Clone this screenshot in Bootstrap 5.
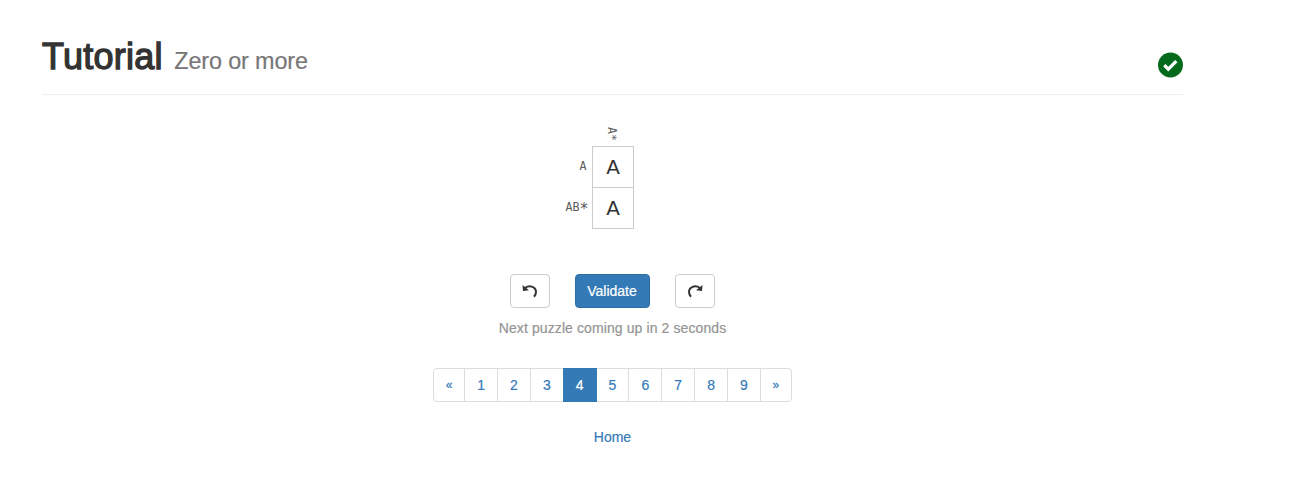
<!DOCTYPE html>
<html lang="en">
<head>
<meta charset="utf-8">
<meta name="viewport" content="width=device-width, initial-scale=1">
<title>Tutorial</title>
<link href="https://cdn.jsdelivr.net/npm/bootstrap@5.3.0/dist/css/bootstrap.min.css" rel="stylesheet">
<style>
body{font:14px/20px "Liberation Sans",Arial,sans-serif;color:#333;background:#fff;overflow:hidden}
.page{width:1141px;margin-left:42px}
.page-head{height:95px;border-bottom:1px solid #eee}
.page-head h1{font-size:36px;line-height:40px;font-weight:400;margin:37px 0 0;color:#333;white-space:nowrap}
.title-main{-webkit-text-stroke:1.3px #333;letter-spacing:.25px}
.title-sub{font-size:23.4px;color:#777;margin-left:1.5px;letter-spacing:-.13px;-webkit-text-stroke:.2px #777}
.solved{margin-top:52px}
.puzzle{display:grid;grid-template-columns:60px 42px 60px;grid-template-rows:51px 41px 42px;justify-content:center}
.clue{font:11.7px/14px "DejaVu Sans Mono",monospace;color:#5a5a5a}
.clue-row{text-align:right;padding:13px 5px 0 0}
.clue-col{writing-mode:vertical-rl;justify-self:center;align-self:end;padding-bottom:5px;margin-right:2px}
.star{font-size:15px;line-height:1px;vertical-align:-3px;letter-spacing:-2px}
.tile{border:1px solid #ccc;font:20px/40px "DejaVu Sans",sans-serif;text-align:center;grid-column:2;padding-left:1px}
.tile.top{border-bottom:0}
.controls{margin-top:45px;gap:25px}
.controls .btn{height:34px;font-size:14px;line-height:20px;padding:6px 12px;border-radius:4px}
.controls .btn-plain{width:40px;border:1px solid #ccc;background:#fff;padding:7px 11px}
.controls .btn-validate,.controls .btn-validate:hover{width:75px;padding-left:11px;background:#337ab7;border:1px solid #2e6da4;color:#fff;-webkit-text-stroke:.2px #fff}
.notice{color:#949494;margin-top:10px;letter-spacing:.1px;-webkit-text-stroke:.2px #949494}
.pagination{--bs-pagination-font-size:14px;--bs-pagination-padding-x:0;--bs-pagination-padding-y:6px;--bs-pagination-color:#337ab7;--bs-pagination-border-color:#ddd;--bs-pagination-border-radius:4px;--bs-pagination-active-bg:#337ab7;--bs-pagination-active-border-color:#337ab7;margin:30px 0 25px}
.pagination .page-link{width:33.86px;height:34px;line-height:20px;text-align:center;-webkit-text-stroke:.2px}
.pagination .page-item:first-child .page-link,.pagination .page-item:last-child .page-link{width:32px;font-size:12px}
.home{color:#337ab7;-webkit-text-stroke:.2px #337ab7}
</style>
</head>
<body>
<main class="page">
  <header class="page-head d-flex justify-content-between align-items-start">
    <h1><span class="title-main">Tutorial</span> <span class="title-sub">Zero or more</span></h1>
    <svg class="solved" width="25" height="26" viewBox="0 0 25 26"><circle cx="12.5" cy="13" r="12.5" fill="#066a1c"/><path d="M6.300 13.200l4 4 8-8" fill="none" stroke="#fff" stroke-width="3.300"/></svg>
  </header>
  <section class="puzzle">
    <div></div><div class="clue clue-col">A*</div><div></div>
    <div class="clue clue-row">A</div><div class="tile top">A</div><div></div>
    <div class="clue clue-row">AB<span class="star">*</span></div><div class="tile">A</div>
  </section>
  <div class="controls d-flex justify-content-center">
    <button class="btn btn-plain" aria-label="Undo"><svg class="d-block" width="16" height="14" viewBox="0 0 16 14"><path d="M3 4C8 .5 14 3 14 8c0 1.800-.8 3.400-2 4.700" fill="none" stroke="#333" stroke-width="2"/><path d="M.5 1l.5 6 6-.8z" fill="#333"/></svg></button>
    <button class="btn btn-validate">Validate</button>
    <button class="btn btn-plain" aria-label="Redo"><svg class="d-block" width="16" height="14" viewBox="0 0 16 14"><path d="M13 4C8 .5 2 3 2 8c0 1.800.8 3.400 2 4.700" fill="none" stroke="#333" stroke-width="2"/><path d="M15.500 1L15 7l-6-.8z" fill="#333"/></svg></button>
  </div>
  <div class="notice text-center">Next puzzle coming up in 2 seconds</div>
  <nav aria-label="Puzzles">
    <ul class="pagination justify-content-center">
      <li class="page-item"><a class="page-link" href="#">«</a></li>
      <li class="page-item"><a class="page-link" href="#">1</a></li>
      <li class="page-item"><a class="page-link" href="#">2</a></li>
      <li class="page-item"><a class="page-link" href="#">3</a></li>
      <li class="page-item active"><a class="page-link" href="#">4</a></li>
      <li class="page-item"><a class="page-link" href="#">5</a></li>
      <li class="page-item"><a class="page-link" href="#">6</a></li>
      <li class="page-item"><a class="page-link" href="#">7</a></li>
      <li class="page-item"><a class="page-link" href="#">8</a></li>
      <li class="page-item"><a class="page-link" href="#">9</a></li>
      <li class="page-item"><a class="page-link" href="#">»</a></li>
    </ul>
  </nav>
  <div class="text-center"><a class="home text-decoration-none" href="#">Home</a></div>
</main>
</body>
</html>
